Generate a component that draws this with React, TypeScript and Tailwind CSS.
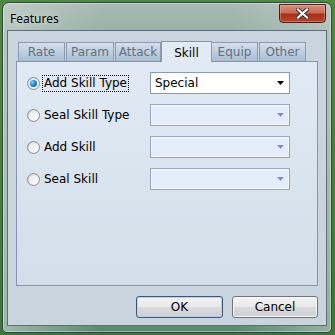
const tabs = [
  { label: 'Rate', w: 'w-[47px]' },
  { label: 'Param', w: 'w-[48px]' },
  { label: 'Attack', w: 'w-[46px]' },
  { label: 'Skill', w: 'w-[51px]', active: true },
  { label: 'Equip', w: 'w-[47px]' },
  { label: 'Other', w: 'w-[47px]' },
];

const rows = [
  { label: 'Add Skill Type', checked: true, value: 'Special' },
  { label: 'Seal Skill Type' },
  { label: 'Add Skill' },
  { label: 'Seal Skill' },
];

function Radio({ checked }: { checked?: boolean }) {
  return (
    <div className="w-[13px] h-[13px] rounded-full border border-[#8c8f94] bg-[linear-gradient(135deg,#cfd2d6,#f7f7f7)] flex items-center justify-center shrink-0">
      <div className="w-[9px] h-[9px] rounded-full bg-[linear-gradient(135deg,#e6e8ea,#ffffff)] flex items-center justify-center">
        {checked && (
          <div className="w-[7px] h-[7px] rounded-full bg-[radial-gradient(circle_at_35%_35%,#7fd0ff_0%,#1d8ad6_45%,#0b4f8f_100%)]" />
        )}
      </div>
    </div>
  );
}

function Dropdown({ value }: { value?: string }) {
  const enabled = value !== undefined;
  return (
    <div
      className={
        enabled
          ? 'w-[140px] h-[22px] border border-[#8a9bb0] bg-white flex items-center pl-[4px] pr-[5px]'
          : 'w-[140px] h-[22px] border border-[#97a6ba] bg-[#e4eefa] shadow-[inset_0_0_0_1px_#f4f8fd] flex items-center pl-[4px] pr-[5px]'
      }
    >
      <span className="flex-1 text-[12px] text-black">{value}</span>
      <svg width="7" height="4" viewBox="0 0 7 4">
        <path d="M0 0H7L3.5 4Z" fill={enabled ? '#000' : '#8a8ec0'} />
      </svg>
    </div>
  );
}

export default function App() {
  return (
    <div className="w-[335px] h-[335px] bg-[linear-gradient(180deg,#4d8a3f,#3e7636)] pt-[2px] pl-[2px] overflow-hidden" style={{ fontFamily: '"DejaVu Sans", Verdana, sans-serif' }}>
      <div className="w-[330px] h-[331px] flex flex-col rounded-t-[7px] rounded-b-[5px] border border-[#2f4a40] bg-[linear-gradient(90deg,rgba(205,214,210,0.6)_0%,rgba(205,214,210,0)_30%,rgba(205,214,210,0)_70%,rgba(205,214,210,0.5)_100%),linear-gradient(180deg,#a9bab3_0%,#94aea3_12%,#86a797_40%,#6f9a82_70%,#5a8a6e_100%)] shadow-[inset_0_0_0_1px_rgba(255,255,255,0.35)]">
        <div className="h-[27px] flex items-start pl-[7px] pr-[5px] shrink-0">
          <span className="mt-[7px] text-[12px] text-black [text-shadow:0_0_6px_rgba(235,245,240,0.9)]" style={{ fontFamily: '"Noto Sans", "Open Sans", sans-serif' }}>
            Features
          </span>
          <div className="ml-auto mt-[1px] w-[47px] h-[19px] rounded-b-[4px] border border-[#4a2018] bg-[linear-gradient(180deg,#d9907f_0%,#c86a55_45%,#a8301a_55%,#b8452c_100%)] flex items-center justify-center shadow-[inset_0_0_0_1px_rgba(255,200,190,0.35)]">
            <svg width="13" height="11" viewBox="0 0 13 11">
              <path d="M2 1.5L11 9.5M11 1.5L2 9.5" stroke="#3a2a28" strokeWidth="4" strokeLinecap="square" />
              <path d="M2 1.5L11 9.5M11 1.5L2 9.5" stroke="#ffffff" strokeWidth="2.2" strokeLinecap="square" />
            </svg>
          </div>
        </div>
        <div className="flex-1 mx-[4px] mb-[6px] border border-[#5f6e7a] bg-[#c9d4df] flex flex-col pt-[9px] px-[8px]">
          <div className="flex items-end h-[21px] pl-[2px] relative z-10">
            {tabs.map((t) =>
              t.active ? (
                <div
                  key={t.label}
                  className={`${t.w} h-[21px] -mb-px -mx-[1px] border border-b-0 border-[#8296b0] bg-[#e2ebf5] flex items-start justify-center pt-[2px] text-[12px] text-black`}
                >
                  {t.label}
                </div>
              ) : (
                <div
                  key={t.label}
                  className={`${t.w} h-[19px] mr-px border border-b-0 border-[#8a9bb3] bg-[linear-gradient(180deg,#d3dfeb,#a9bed3)] flex items-center justify-center text-[12px] text-[#63717f]`}
                >
                  {t.label}
                </div>
              )
            )}
          </div>
          <div className="h-[225px] border border-[#8296b0] bg-[linear-gradient(180deg,#e1eaf4,#d3deea)] pl-[10px] pt-[10px] flex flex-col gap-[10px]">
            {rows.map((r) => (
              <div key={r.label} className="flex items-center h-[22px]">
                <div className="w-[123px] flex items-center gap-[3px]">
                  <Radio checked={r.checked} />
                  <span
                    className={
                      r.checked
                        ? 'text-[12px] text-black px-px leading-[15px] outline outline-1 outline-dotted outline-black'
                        : 'text-[12px] text-black px-px leading-[15px]'
                    }
                  >
                    {r.label}
                  </span>
                </div>
                <Dropdown value={r.value} />
              </div>
            ))}
          </div>
          <div className="flex justify-end gap-[9px] mt-[10px]">
            <button className="w-[87px] h-[22px] rounded-[3px] border border-[#3f5878] bg-[linear-gradient(180deg,#f4f4f4_0%,#e9e9e9_48%,#d9dbde_52%,#cdd0d4_100%)] shadow-[inset_0_0_0_1px_#b9d2ea] text-[12px] text-black">
              OK
            </button>
            <button className="w-[86px] h-[22px] rounded-[3px] border border-[#70757c] bg-[linear-gradient(180deg,#f4f4f4_0%,#e9e9e9_48%,#d9dbde_52%,#cdd0d4_100%)] shadow-[inset_0_0_0_1px_#f7f7f7] text-[12px] text-black">
              Cancel
            </button>
          </div>
        </div>
      </div>
    </div>
  );
}
